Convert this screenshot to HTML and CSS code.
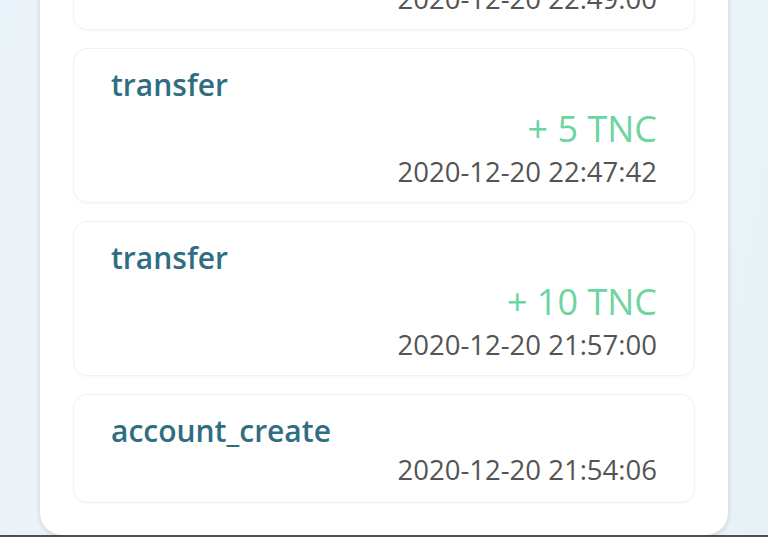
FILE: index.html
```html
<!DOCTYPE html>
<html lang="en">

<head>
  <meta charset="UTF-8">
  <meta name="viewport" content="width=device-width, initial-scale=1">
  <title>history</title>
  <link rel="stylesheet" href="styles.css">
</head>

<body>
  <div class="panel">
    <div class="record">
      <div class="op">transfer</div>
      <div class="amount">+ 2 TNC</div>
      <div class="time">2020-12-20 22:49:00</div>
    </div>
    <div class="record">
      <div class="op">transfer</div>
      <div class="amount">+ 5 TNC</div>
      <div class="time">2020-12-20 22:47:42</div>
    </div>
    <div class="record">
      <div class="op">transfer</div>
      <div class="amount">+ 10 TNC</div>
      <div class="time">2020-12-20 21:57:00</div>
    </div>
    <div class="record last">
      <div class="op">account_create</div>
      <div class="time">2020-12-20 21:54:06</div>
    </div>
  </div>
  <div class="navline"></div>
</body>

</html>
```

FILE: styles.css
```css
* {
  box-sizing: border-box;
}

html,
body {
  margin: 0;
  height: 537px;
  overflow: hidden;
}

body {
  font-family: "Open Sans", "Noto Sans", sans-serif;
  background: linear-gradient(100deg, #e9f2f8 0%, #f1f6f9 45%, #e7f2f4 100%);
}

.panel {
  margin: -158px 40px 0 40px;
  padding: 33px 33px 32px 33px;
  background-color: #fff;
  border-radius: 0 0 22px 22px;
  box-shadow: 0 2px 5px rgba(0, 0, 0, 0.14);
  display: flex;
  flex-direction: column;
  gap: 18px;
}

.record {
  padding: 16px 37px 11px 37px;
  border: 1px solid #f1f1f1;
  border-radius: 14px;
  box-shadow: 0 1px 3px rgba(0, 0, 0, 0.03);
}

.record.last {
  padding-bottom: 13px;
}

.op {
  font-size: 30px;
  line-height: 40px;
  font-weight: 600;
  color: #2f6e82;
}

.amount {
  font-size: 36px;
  line-height: 48px;
  font-weight: 500;
  color: #6dd5a0;
  text-align: right;
}

.time {
  font-size: 27.5px;
  line-height: 38px;
  color: #545454;
  text-align: right;
}

.navline {
  height: 2px;
  background-color: #4d4d4d;
}
```
